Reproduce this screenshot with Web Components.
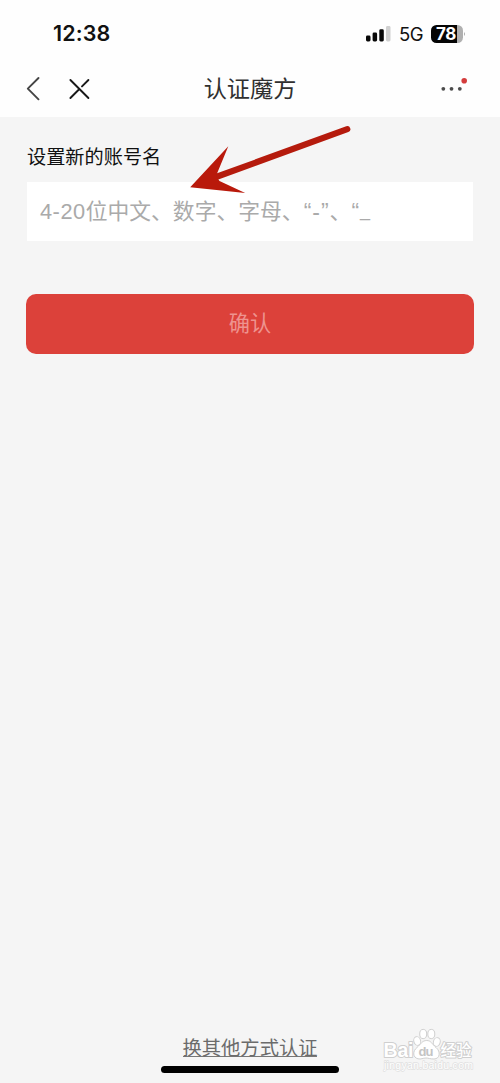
<!DOCTYPE html>
<html lang="zh-CN">
<head>
<meta charset="utf-8">
<title>认证魔方</title>
<style>
body { margin: 0; background: #f5f5f5; font-family: "Liberation Sans", "Noto Sans CJK SC", sans-serif; }
</style>
</head>
<body>
<auth-page></auth-page>
<script>
function define(name, html) {
  const t = document.createElement('template');
  t.innerHTML = html;
  customElements.define(name, class extends HTMLElement {
    constructor() {
      super();
      this.attachShadow({ mode: 'open' }).appendChild(t.content.cloneNode(true));
    }
  });
}

define('status-bar', `
<style>
:host { display: flex; box-sizing: border-box; height: 60px; padding: 20px 34px 0 53px; justify-content: space-between; background: #fefefe; color: #111; }
.time { font: 600 21.5px/27px Inter, sans-serif; letter-spacing: .1px; }
.right { display: flex; height: 27px; align-items: center; }
.net { font: 400 18.5px/27px Inter, sans-serif; margin: 1px 8px 0 8px; width: 24px; letter-spacing: -.4px; }
.bat { display: flex; align-items: center; }
.cell { box-sizing: border-box; width: 32px; height: 18px; border-radius: 5.5px; background: linear-gradient(90deg, #050505 26px, #b0b0b0 26px); color: #fff; font: 700 17px/18px Inter, sans-serif; padding-left: 5px; letter-spacing: -.5px; }
svg { display: block; }
</style>
<span class="time">12:38</span>
<div class="right">
  <svg width="25" height="18" viewBox="0 0 25 18"><g fill="#080808"><rect x="0" y="10.5" width="4.5" height="6" rx="1.4"/><rect x="6.6" y="7.5" width="4.5" height="9" rx="1.4"/><rect x="13.3" y="4.3" width="4.5" height="12.2" rx="1.4"/></g><rect x="20" y="1" width="4.5" height="15.5" rx="1.4" fill="#d0d0d0"/></svg>
  <span class="net">5G</span>
  <span class="bat"><span class="cell">78</span><svg width="3" height="6" viewBox="0 0 3 6"><path d="M1 1Q3 3 1 5Z" fill="#aaa"/></svg></span>
</div>`);

define('nav-bar', `
<style>
:host { display: grid; grid-template-columns: 150px 1fr 150px; height: 57px; background: #fefefe; color: #303030; }
svg { display: block; }
.title { text-align: center; font-size: 23.2px; line-height: 58px; height: 57px; }
</style>
<svg width="150" height="57" viewBox="0 0 150 57" fill="none" stroke-linecap="round" stroke-linejoin="round"><path d="M38.5 18L27.8 28.7L38.5 39.3" stroke="#444" stroke-width="1.9"/><path d="M70.4 20L88.4 38M88.4 20L82 26.4M79.4 29L70.4 38" stroke="#181818" stroke-width="1.9"/></svg>
<div class="title"><slot></slot></div>
<svg width="150" height="57" viewBox="0 0 150 57"><g fill="#4c4c4c"><circle cx="93.3" cy="28.8" r="1.9"/><circle cx="101.5" cy="28.8" r="1.9"/><circle cx="109.8" cy="28.8" r="1.9"/></g><circle cx="114.2" cy="20.8" r="2.8" fill="#d43c3c"/></svg>`);

define('name-field', `
<style>
:host { display: block; color: #111; }
.label { font-size: 19.2px; line-height: 26px; padding: 28px 0 11px; height: 26px; }
.box { display: flex; box-sizing: border-box; height: 59px; margin-right: 1px; padding-left: 13px; background: #fff; color: #aaa; font-size: 21.8px; line-height: 60px; white-space: nowrap; }
.num { letter-spacing: .5px; }
.quote { font-size: 23px; letter-spacing: 1px; }
.low { font-size: 18px; line-height: 57px; }
</style>
<div class="label"><slot name="label"></slot></div>
<div class="box"><span class="num">4-20</span><span>位中文、数字、字母、</span><span class="quote">“-”</span><span>、</span><span class="quote">“</span><span class="low">_</span></div>`);

define('confirm-button', `
<style>
:host { display: block; height: 60px; border-radius: 10px; background: #dc413a; color: #ee938f; text-align: center; font-size: 21.2px; line-height: 60px; font-weight: 400; }
</style><slot></slot>`);

define('pointer-arrow', `
<style>
:host { position: absolute; left: 180px; top: 120px; width: 180px; height: 80px; }
svg { display: block; }
</style>
<svg width="180" height="80" viewBox="0 0 180 80"><path d="M167.3 9.2L36 57" stroke="#b51b0d" stroke-width="6.2" stroke-linecap="round"/><path d="M10.2 67.3L48.3 26.3L36 56L39.5 61L65.2 73Z" fill="#b9190b"/></svg>`);

define('baidu-mark', `
<style>
:host { position: absolute; left: 380px; top: 1026px; width: 96px; height: 48px; }
svg { display: block; }
text { paint-order: stroke; stroke: #cfcfcf; stroke-width: 2px; stroke-linejoin: round; fill: #fff; }
</style>
<svg width="96" height="48" viewBox="0 0 96 48">
<g fill="#fff" stroke="#d0d0d0" stroke-width="1"><ellipse cx="37.2" cy="15" rx="3.4" ry="4.4" transform="rotate(-15 37.2 15)"/><ellipse cx="43.2" cy="8" rx="3.5" ry="4.6"/><ellipse cx="51.3" cy="8" rx="3.5" ry="4.6"/><ellipse cx="56.8" cy="16" rx="3.4" ry="4.4" transform="rotate(15 56.8 16)"/><path d="M46.8 14.5C51 14.5 52 18 56 21.5C61 25.5 60 33 54 33C50 33 48.5 32 46 32C43 32 41 33.5 38 32.8C32.5 31.5 32.5 25 37 21.5C41 18 42 14.5 46.8 14.5Z"/></g>
<text x="3.5" y="30.5" font-family="Liberation Sans, sans-serif" font-weight="700" font-size="19.5" textLength="30">Bai</text>
<text x="38.5" y="29.5" font-family="Liberation Sans, sans-serif" font-weight="700" font-size="13" style="fill:#c4c4c4;stroke:none" textLength="15">du</text>
<text x="60.5" y="29.5" font-family="Noto Sans CJK SC, sans-serif" font-weight="500" font-size="15.5">经验</text>
<text x="4" y="43" font-family="Liberation Sans, sans-serif" font-size="10.5" textLength="89" style="stroke:#e0e0e0;stroke-width:1.4px">jingyan.baidu.com</text>
</svg>`);

define('page-footer', `
<style>
:host { display: flex; flex-direction: column; align-items: center; height: 51px; margin-top: auto; color: #6b6b6b; font-size: 19.3px; }
.link { display: block; border-bottom: 1px solid #777; line-height: 33px; box-sizing: border-box; height: 25px; }
.home { width: 178px; height: 7px; border-radius: 4px; background: #000; margin-top: 9px; }
</style>
<span class="link"><slot></slot></span><div class="home"></div>`);

define('auth-page', `
<style>
:host { display: flex; flex-direction: column; position: relative; height: 1083px; overflow: hidden; background: #f5f5f5; }
main { padding: 0 26px 0 27px; }
confirm-button { margin: 53px 0 0 -1px; }
</style>
<status-bar></status-bar>
<nav-bar>认证魔方</nav-bar>
<main><name-field><span slot="label">设置新的账号名</span></name-field><confirm-button>确认</confirm-button></main>
<page-footer>换其他方式认证</page-footer>
<pointer-arrow></pointer-arrow>
<baidu-mark></baidu-mark>`);
</script>
</body>
</html>
